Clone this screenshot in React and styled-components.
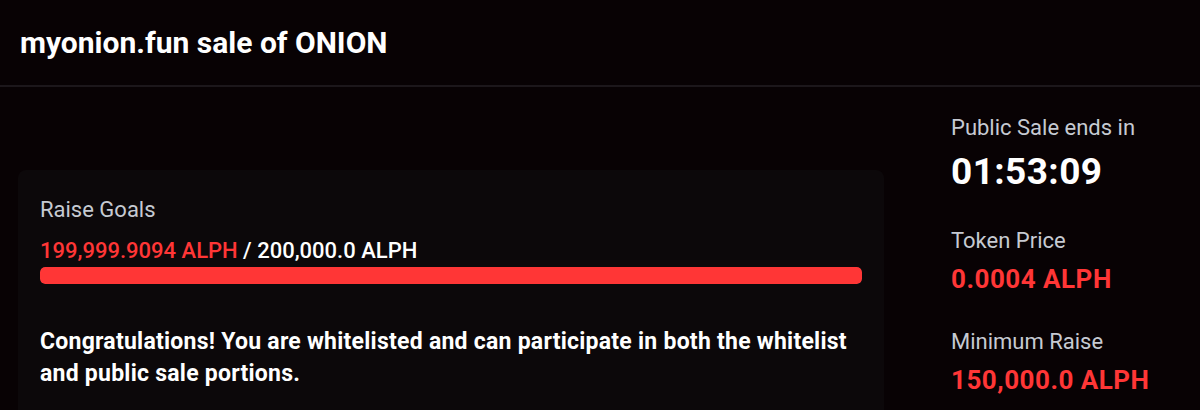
import React from 'react'
import styled, { createGlobalStyle } from 'styled-components'

const GlobalStyle = createGlobalStyle`
    html, body {
        margin: 0;
        padding: 0;
        background: #080204;
    }
    body {
        font-family: Roboto, 'Liberation Sans', sans-serif;
        color: #fff;
    }
`

const stats = [
    { label: 'Token Price', value: '0.0004 ALPH' },
    { label: 'Minimum Raise', value: '150,000.0 ALPH' },
]

const App = () => {
    return (
        <Page>
            <GlobalStyle />
            <Header>
                <Title>myonion.fun sale of ONION</Title>
            </Header>
            <Body>
                <Main>
                    <Card>
                        <Label>Raise Goals</Label>
                        <Amounts>
                            <Raised>199,999.9094 ALPH</Raised> / 200,000.0 ALPH
                        </Amounts>
                        <Track>
                            <Fill style={{ width: `${(199999.9094 / 200000) * 100}%` }} />
                        </Track>
                        <Notice>
                            Congratulations! You are whitelisted and can participate in both the whitelist and public sale portions.
                        </Notice>
                    </Card>
                </Main>
                <Side>
                    <Stat>
                        <Label>Public Sale ends in</Label>
                        <Timer>01:53:09</Timer>
                    </Stat>
                    {stats.map((s) => (
                        <Stat key={s.label}>
                            <Label>{s.label}</Label>
                            <RedValue>{s.value}</RedValue>
                        </Stat>
                    ))}
                </Side>
            </Body>
        </Page>
    )
}

export default App

const Page = styled.div`
    width: 1200px;
    height: 410px;
    overflow: hidden;
    background: #080204;
`

const Header = styled.div`
    height: 87px;
    border-bottom: 2px solid #1c171b;
    display: flex;
    align-items: center;
    padding: 0 20px;
    box-sizing: border-box;
`

const Title = styled.h1`
    margin: 0;
    font-size: 30px;
    font-weight: 700;
    color: #fff;
`

const Body = styled.div`
    display: flex;
    align-items: flex-start;
    padding: 0 18px;
`

const Main = styled.div`
    width: 866px;
    padding-top: 83px;
`

const Card = styled.div`
    background: #0c080a;
    border-radius: 8px;
    padding: 27px 22px 30px;
`

const Label = styled.div`
    font-size: 22px;
    color: #c6cad2;
    line-height: 26px;
`

const Amounts = styled.div`
    margin-top: 15px;
    font-size: 22px;
    line-height: 26px;
    color: #fff;
    font-weight: 500;
`

const Raised = styled.span`
    color: #ff3636;
`

const Track = styled.div`
    margin-top: 3px;
    height: 17px;
    border-radius: 5px;
    background: #2a2226;
    overflow: hidden;
`

const Fill = styled.div`
    height: 100%;
    background: #ff3636;
    border-radius: 5px;
`

const Notice = styled.p`
    margin: 42px 0 0;
    font-size: 23px;
    line-height: 32px;
    font-weight: 700;
    letter-spacing: 0.25px;
    color: #fff;
    max-width: 822px;
`

const Side = styled.div`
    margin-left: 67px;
    padding-top: 28px;
    display: flex;
    flex-direction: column;
    gap: 35px;
`

const Stat = styled.div`
    display: flex;
    flex-direction: column;
    gap: 10px;
`

const Timer = styled.div`
    font-size: 37px;
    font-weight: 700;
    line-height: 42px;
    letter-spacing: 0.4px;
    color: #fff;
`

const RedValue = styled.div`
    font-size: 26px;
    font-weight: 700;
    line-height: 30px;
    letter-spacing: 0.5px;
    color: #ff3636;
`
